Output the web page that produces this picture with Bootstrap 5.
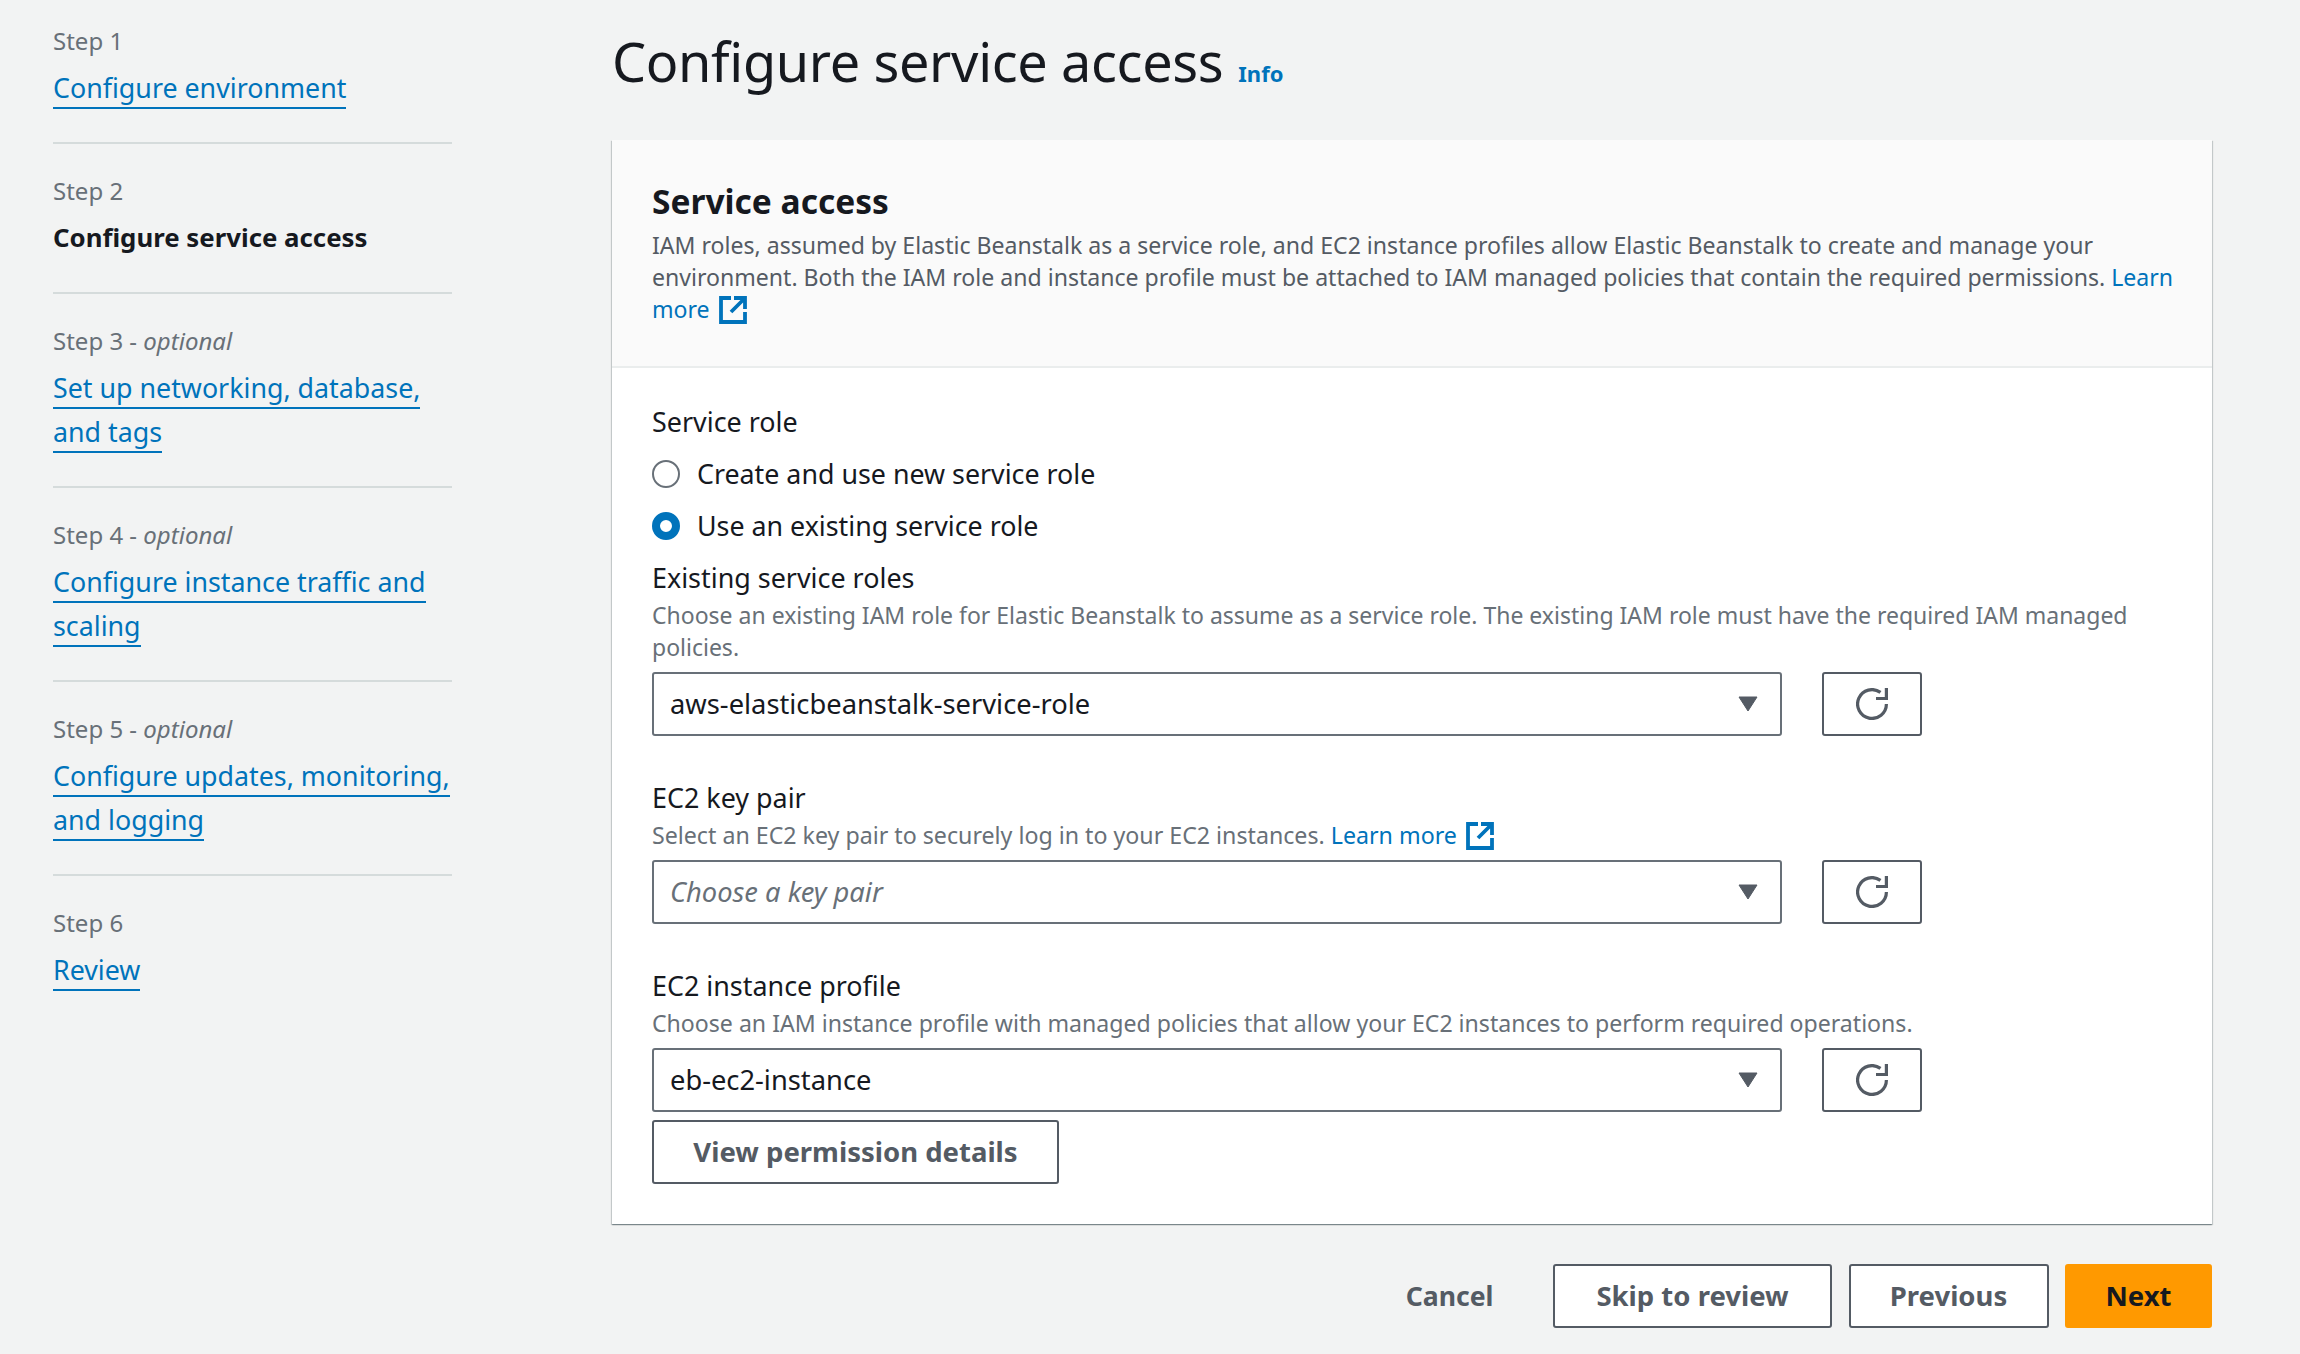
<!DOCTYPE html>
<html lang="en"><head><meta charset="utf-8"><title>Configure service access</title>
<link href="https://cdn.jsdelivr.net/npm/bootstrap@5.3.0/dist/css/bootstrap.min.css" rel="stylesheet">
<style>
html,body{height:100%}
body{background:#f2f3f3;color:#16191f;font-family:"Noto Sans","Open Sans",sans-serif;font-size:23px;line-height:32px;overflow:hidden}
a{color:#0073bb;text-decoration:none}
.shell{display:flex;padding:0 88px 0 53px}
.side{width:399px;flex:none;margin-right:160px;padding-top:25px}
.stepitem{height:119px;border-bottom:2px solid #d5dbdb;margin-bottom:31px}
.stepitem.two{height:163px}
.stepitem:last-child{border:0}
.steplabel{color:#687078;font-size:24px;line-height:32px;margin-bottom:9px}
.steplink{display:inline;font-size:26.8px;line-height:44px;border-bottom:2px solid #0073bb;padding-bottom:1px}
.stepcur{font-size:25.8px;line-height:42px;font-weight:700}
.mainpane{flex:1;min-width:0}
.titlerow{height:140px;padding-top:23px;display:flex;align-items:baseline;gap:15px}
.titlerow h1{font-size:54px;letter-spacing:-.35px;line-height:76px;font-weight:400;margin:0}
.infolink{font-size:22px;font-weight:700}
.panel{background:#fff;box-shadow:0 1px 1px 0 rgba(0,28,36,.3),1px 1px 1px 0 rgba(0,28,36,.15),-1px 1px 1px 0 rgba(0,28,36,.15);height:1084px}
.panelhead{background:#fafafa;height:228px;border-bottom:2px solid #eaeded;padding:39px 30px 0 40px}
.panelhead h2{font-size:33.5px;line-height:44px;font-weight:700;margin:0 0 6px}
.desc{color:#545b64;line-height:32px;font-size:23.08px}
.panelbody{padding:38px 40px 0}
.lbl{font-size:26.9px;line-height:32px;color:#16191f}
.hint{color:#687078;line-height:32px;margin-top:5px}
.hintwide{font-size:23.2px}
.hintmid{font-size:23.1px}
.radrow{display:flex;align-items:center;gap:17px;height:32px;margin-top:20px;font-size:26.8px}
.radmark{width:28px;height:28px;border-radius:50%;border:2.5px solid #687078;background:#fff;flex:none}
.radmark.on{border:8px solid #0073bb}
.selrow{display:flex;gap:40px;height:64px;margin-top:9px}
.selbox{flex:none;width:1130px;height:64px;border:2.5px solid #687078;border-radius:3px;display:flex;align-items:center;justify-content:space-between;padding:0 22px 0 16px;font-size:27.3px;background:#fff}
.selbox em{color:#687078}
.refreshbtn{width:100px;height:64px;border:2.5px solid #545b64;border-radius:3px;display:flex;align-items:center;justify-content:center;background:#fff}
.viewbtn,.footbtn{border:2.5px solid #545b64;border-radius:3px;background:#fff;color:#545b64;font-size:27.5px;font-weight:700;display:flex;align-items:center;justify-content:center;height:64px}
.viewbtn{width:407px;margin-top:8px}
.footrow{display:flex;justify-content:flex-end;align-items:center;margin-top:40px;gap:16.5px}
.footbtn.skipb{width:279px}
.footbtn.prevb{width:200px}
.footbtn.nextb{width:147px;background:#f90;border-color:#f90;color:#16191f}
.cancelb{color:#545b64;font-weight:700;font-size:26.6px;margin-right:43px}
.extico{display:inline-block;vertical-align:-6px;margin-left:9px}
.gaplbl{margin-top:46px}
.gaptop{margin-top:20px}
</style></head><body>
<div class="shell">
<nav class="side">
<div class="stepitem"><div class="steplabel">Step 1</div><a class="steplink" href="#">Configure environment</a></div>
<div class="stepitem"><div class="steplabel">Step 2</div><div class="stepcur">Configure service access</div></div>
<div class="stepitem two"><div class="steplabel">Step 3 - <i>optional</i></div><a class="steplink" href="#">Set up networking, database, and tags</a></div>
<div class="stepitem two"><div class="steplabel">Step 4 - <i>optional</i></div><a class="steplink" href="#">Configure instance traffic and scaling</a></div>
<div class="stepitem two"><div class="steplabel">Step 5 - <i>optional</i></div><a class="steplink" href="#">Configure updates, monitoring, and logging</a></div>
<div class="stepitem"><div class="steplabel">Step 6</div><a class="steplink" href="#">Review</a></div>
</nav>
<main class="mainpane">
<div class="titlerow"><h1>Configure service access</h1><a class="infolink" href="#">Info</a></div>
<section class="panel">
<header class="panelhead"><h2>Service access</h2>
<div class="desc">IAM roles, assumed by Elastic Beanstalk as a service role, and EC2 instance profiles allow Elastic Beanstalk to create and manage your environment. Both the IAM role and instance profile must be attached to IAM managed policies that contain the required permissions. <a href="#">Learn more<svg class="extico" width="28" height="28" viewBox="0 0 28 28" fill="none" stroke="#0073bb" stroke-width="3.8"><path d="M12 2H2v24h24V16M15 2h11v11M26 2 12 16"/></svg></a></div></header>
<div class="panelbody">
<div class="lbl">Service role</div>
<div class="radrow"><span class="radmark"></span>Create and use new service role</div>
<div class="radrow"><span class="radmark on"></span>Use an existing service role</div>
<div class="lbl gaptop">Existing service roles</div>
<div class="hint">Choose an existing IAM role for Elastic Beanstalk to assume as a service role. The existing IAM role must have the required IAM managed policies.</div>
<div class="selrow"><div class="selbox">aws-elasticbeanstalk-service-role<svg width="20" height="16" viewBox="0 0 20 16"><path d="M1 1h18l-9 14z" fill="#545b64" stroke="#545b64" stroke-linejoin="round"/></svg></div><div class="refreshbtn"><svg width="32" height="32" viewBox="0 0 32 32" fill="none" stroke="#545b64" stroke-width="3.2"><path d="M30.4 16A14.4 14.4 0 1 1 24.5 4.4"/><path d="M30.4 0v10.5H20"/></svg></div></div>
<div class="lbl gaplbl">EC2 key pair</div>
<div class="hint hintwide">Select an EC2 key pair to securely log in to your EC2 instances. <a href="#">Learn more<svg class="extico" width="28" height="28" viewBox="0 0 28 28" fill="none" stroke="#0073bb" stroke-width="3.8"><path d="M12 2H2v24h24V16M15 2h11v11M26 2 12 16"/></svg></a></div>
<div class="selrow"><div class="selbox"><em>Choose a key pair</em><svg width="20" height="16" viewBox="0 0 20 16"><path d="M1 1h18l-9 14z" fill="#545b64" stroke="#545b64" stroke-linejoin="round"/></svg></div><div class="refreshbtn"><svg width="32" height="32" viewBox="0 0 32 32" fill="none" stroke="#545b64" stroke-width="3.2"><path d="M30.4 16A14.4 14.4 0 1 1 24.5 4.4"/><path d="M30.4 0v10.5H20"/></svg></div></div>
<div class="lbl gaplbl">EC2 instance profile</div>
<div class="hint hintmid">Choose an IAM instance profile with managed policies that allow your EC2 instances to perform required operations.</div>
<div class="selrow"><div class="selbox">eb-ec2-instance<svg width="20" height="16" viewBox="0 0 20 16"><path d="M1 1h18l-9 14z" fill="#545b64" stroke="#545b64" stroke-linejoin="round"/></svg></div><div class="refreshbtn"><svg width="32" height="32" viewBox="0 0 32 32" fill="none" stroke="#545b64" stroke-width="3.2"><path d="M30.4 16A14.4 14.4 0 1 1 24.5 4.4"/><path d="M30.4 0v10.5H20"/></svg></div></div>
<div class="viewbtn">View permission details</div>
</div></section>
<div class="footrow"><span class="cancelb">Cancel</span><span class="footbtn skipb">Skip to review</span><span class="footbtn prevb">Previous</span><span class="footbtn nextb">Next</span></div>
</main></div>
<script src="https://cdn.jsdelivr.net/npm/bootstrap@5.3.0/dist/js/bootstrap.bundle.min.js"></script>
</body></html>
